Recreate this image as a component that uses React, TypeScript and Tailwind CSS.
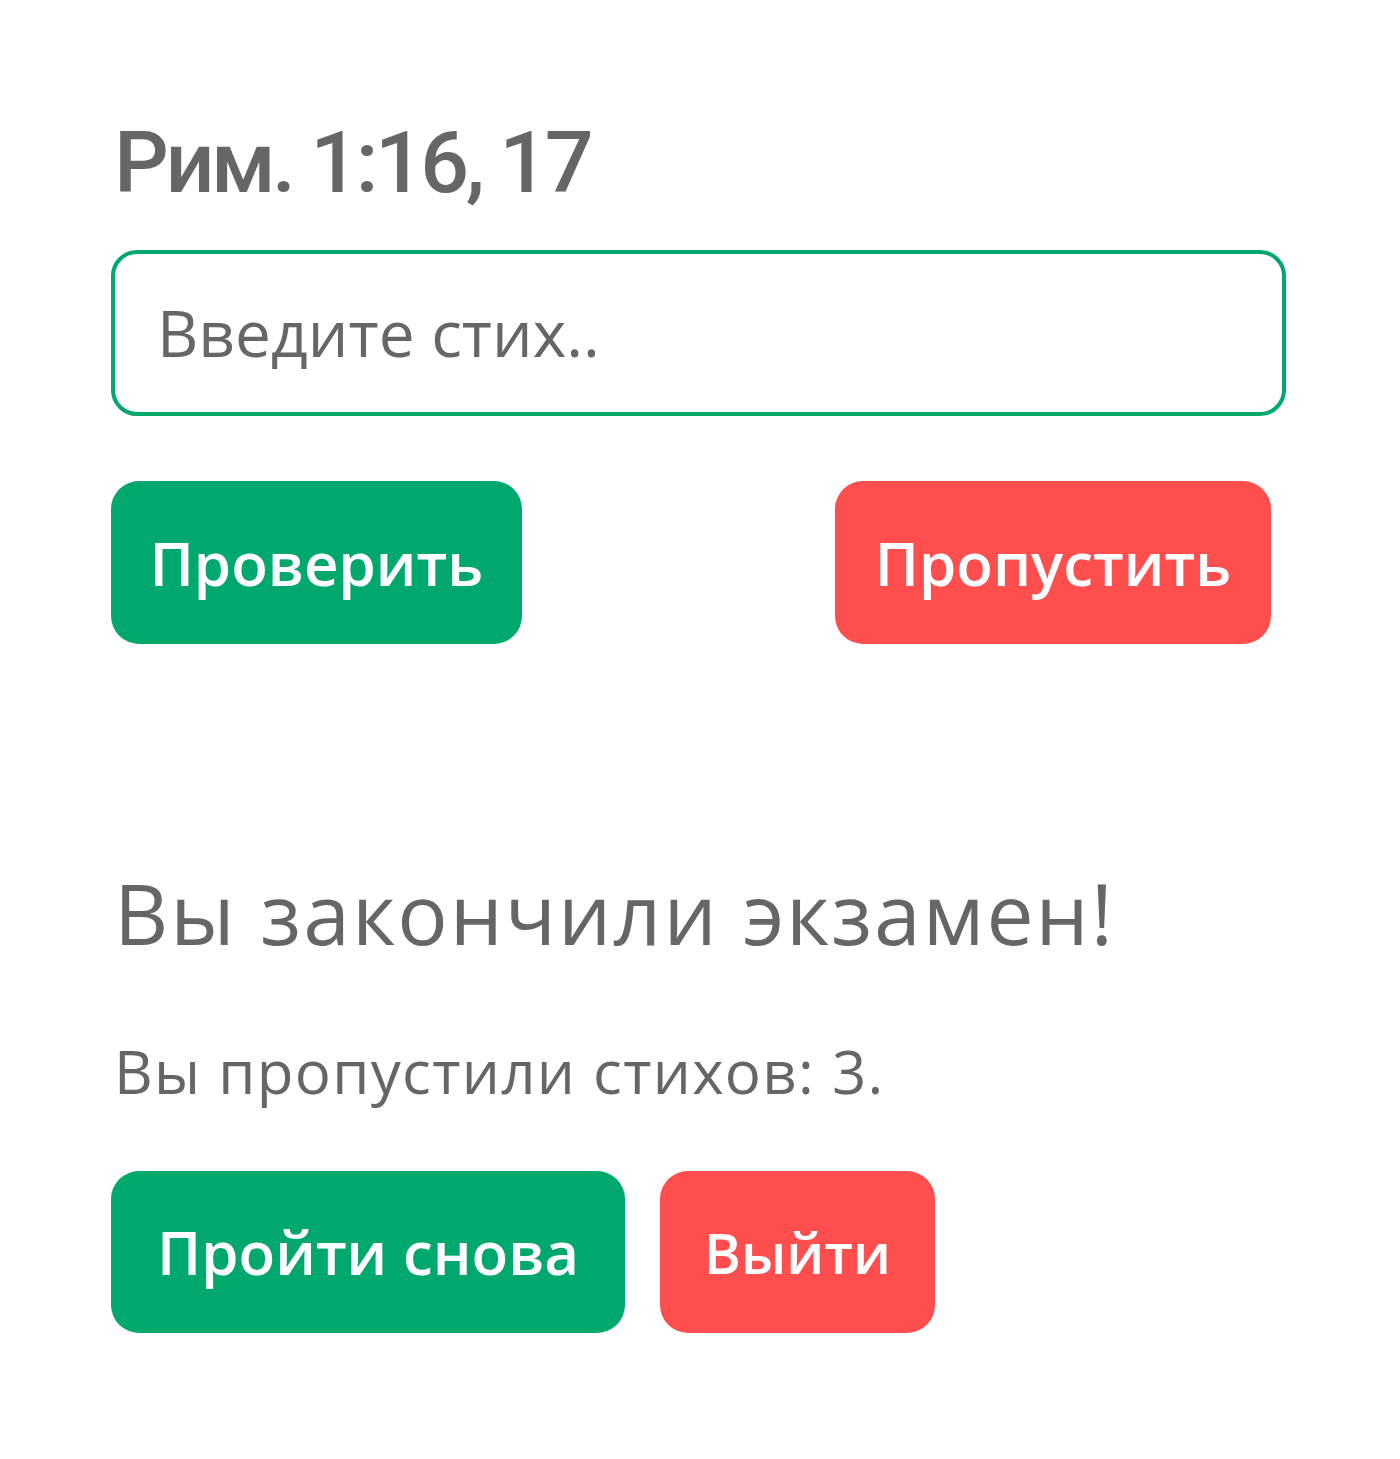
export default function App() {
  return (
    <div className="min-h-[1459px] bg-white text-[#666666] font-['Open_Sans',sans-serif]">
      <div className="w-[1175px] ml-[111px] pt-[110px]">
        <h2 className="text-[86px] leading-[106px] font-medium font-['Roboto',sans-serif] tracking-[-3.5px] pl-[3px]">
          Рим. 1:16, 17
        </h2>
        <div className="mt-[34px] h-[166px] rounded-[26px] border-[4px] border-[#00a86b] flex items-center px-[42px]">
          <input
            className="w-full outline-none bg-transparent text-[64px] font-medium text-[#666666] placeholder:text-[#666666]"
            placeholder="Введите стих.."
          />
        </div>
        <div className="mt-[65px] flex justify-between pr-[15px]">
          <button className="h-[163px] w-[411px] rounded-[28px] bg-[#00a86b] text-white text-[60px] font-semibold">
            Проверить
          </button>
          <button className="h-[163px] w-[436px] rounded-[28px] bg-[#ff4e4e] text-white text-[60px] font-semibold">
            Пропустить
          </button>
        </div>
        <h2 className="mt-[219px] text-[84px] leading-[100px] font-medium tracking-[2px] pl-[3px]">
          Вы закончили экзамен!
        </h2>
        <p className="mt-[68px] text-[60px] leading-[80px] font-medium tracking-[1.3px] pl-[3px]">
          Вы пропустили стихов: 3.
        </p>
        <div className="mt-[60px] flex gap-[35px]">
          <button className="h-[162px] px-[46px] rounded-[28px] bg-[#00a86b] text-white text-[60px] font-semibold">
            Пройти снова
          </button>
          <button className="h-[162px] px-[44px] rounded-[28px] bg-[#ff4e4e] text-white text-[56px] font-semibold">
            Выйти
          </button>
        </div>
      </div>
    </div>
  );
}
